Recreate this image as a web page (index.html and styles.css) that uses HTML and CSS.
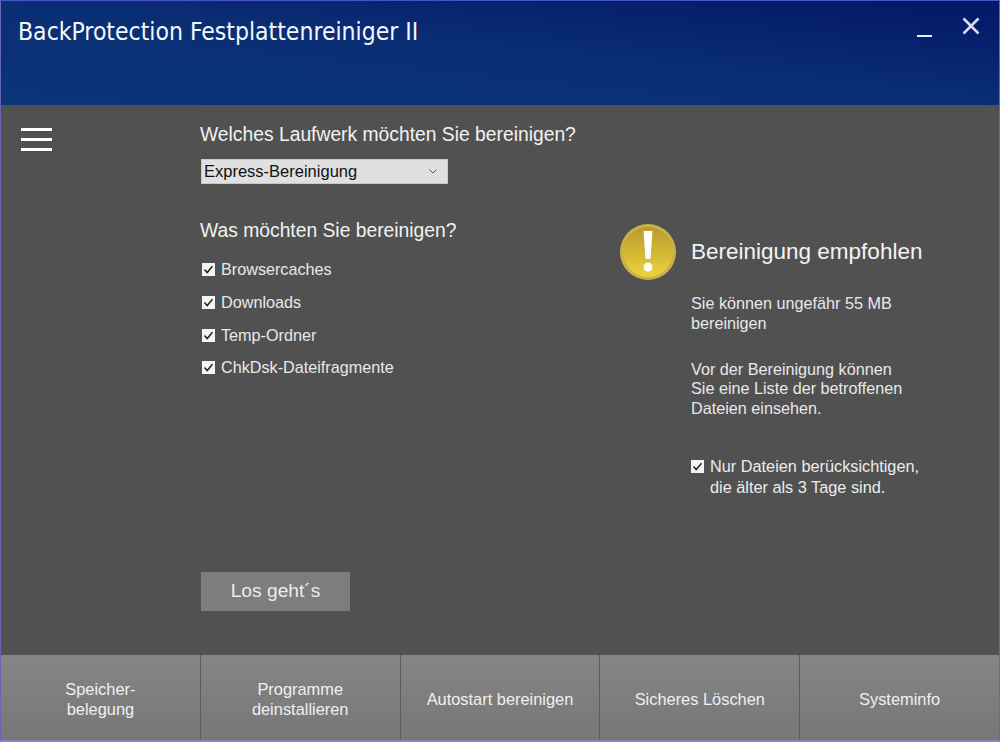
FILE: index.html
```html
<!DOCTYPE html>
<html lang="de">
<head>
  <meta charset="UTF-8" />
  <title>BackProtection Festplattenreiniger II</title>
  <link rel="stylesheet" href="styles.css">
</head>
<body>
  <div class="window">
    <header class="titlebar">
      <h1>BackProtection Festplattenreiniger II</h1>
      <div class="window-buttons">
        <svg class="btn-min" width="16" height="4" viewBox="0 0 16 4"><rect y="1" width="15" height="2" fill="#e8ecf8"/></svg>
        <svg class="btn-close" width="20" height="20" viewBox="0 0 20 20"><path d="M2.5 2.5 17.5 17.5M17.5 2.5 2.5 17.5" stroke="#d8dcec" stroke-width="2.6" fill="none"/></svg>
      </div>
    </header>

    <main class="content">
      <div class="menu-col">
        <div class="hamburger"><span></span><span></span><span></span></div>
      </div>

      <div class="form-col">
        <h2 class="question">Welches Laufwerk möchten Sie bereinigen?</h2>
        <div class="select">
          <span>Express-Bereinigung</span>
          <svg width="8" height="5" viewBox="0 0 8 5"><path d="M.5.5 4 4 7.5.5" stroke="#555" fill="none"/></svg>
        </div>
        <h2 class="question second">Was möchten Sie bereinigen?</h2>
        <ul class="checks">
          <li><span class="check"><svg viewBox="0 0 13 13"><path d="M2.5 6.5 5.2 9.5 10.5 3.2" stroke="#222" stroke-width="1.5" fill="none"/></svg></span>Browsercaches</li>
          <li><span class="check"><svg viewBox="0 0 13 13"><path d="M2.5 6.5 5.2 9.5 10.5 3.2" stroke="#222" stroke-width="1.5" fill="none"/></svg></span>Downloads</li>
          <li><span class="check"><svg viewBox="0 0 13 13"><path d="M2.5 6.5 5.2 9.5 10.5 3.2" stroke="#222" stroke-width="1.5" fill="none"/></svg></span>Temp-Ordner</li>
          <li><span class="check"><svg viewBox="0 0 13 13"><path d="M2.5 6.5 5.2 9.5 10.5 3.2" stroke="#222" stroke-width="1.5" fill="none"/></svg></span>ChkDsk-Dateifragmente</li>
        </ul>
        <button class="go">Los geht´s</button>
      </div>

      <div class="info-col">
        <div class="status">
          <svg width="58" height="58" viewBox="0 0 58 58">
            <defs>
              <linearGradient id="gold" x1="0" y1="0" x2="0" y2="1">
                <stop offset="0" stop-color="#b89a2c"/>
                <stop offset="1" stop-color="#edd23e"/>
              </linearGradient>
            </defs>
            <circle cx="29" cy="29" r="28" fill="#c9b049"/>
            <circle cx="29" cy="29" r="25" fill="url(#gold)"/>
            <path d="M24.5 8h9l-2 28h-5z" fill="#fff"/>
            <circle cx="29" cy="44" r="4.5" fill="#fff"/>
          </svg>
          <h3>Bereinigung empfohlen</h3>
        </div>
        <p class="note first">Sie können ungefähr 55 MB<br>bereinigen</p>
        <p class="note">Vor der Bereinigung können<br>Sie eine Liste der betroffenen<br>Dateien einsehen.</p>
        <div class="age-check">
          <span class="check"><svg viewBox="0 0 13 13"><path d="M2.5 6.5 5.2 9.5 10.5 3.2" stroke="#222" stroke-width="1.5" fill="none"/></svg></span>
          <span>Nur Dateien berücksichtigen,<br>die älter als 3 Tage sind.</span>
        </div>
      </div>
    </main>

    <nav class="tabs">
      <a>Speicher-<br>belegung</a>
      <a>Programme<br>deinstallieren</a>
      <a>Autostart bereinigen</a>
      <a>Sicheres Löschen</a>
      <a>Systeminfo</a>
    </nav>
  </div>
</body>
</html>
```

FILE: styles.css
```css
* {
  box-sizing: border-box;
}

body {
  margin: 0;
  font-family: "Liberation Sans", Arial, sans-serif;
  color: #f2f2f2;
}

.window {
  width: 1000px;
  height: 742px;
  display: flex;
  flex-direction: column;
  background: #515151;
  border-left: 1px solid #6a63b8;
  border-right: 1px solid #6a63b8;
  border-top: 1px solid #4654c8;
  border-bottom: 2px solid #8a84c4;
}

.titlebar {
  height: 104px;
  flex: none;
  display: flex;
  justify-content: space-between;
  padding: 15px 18px 0 17px;
  background: linear-gradient(to bottom left, #021768 0%, #0a2e74 50%, #0b3478 100%);
}

.titlebar h1 {
  margin: 0;
  font-family: "DejaVu Sans Condensed", "DejaVu Sans", sans-serif;
  font-size: 24.5px;
  font-weight: 400;
  line-height: 32px;
  color: #f4f7fb;
}

.window-buttons {
  display: flex;
  align-items: flex-start;
  gap: 28px;
}

.btn-min {
  margin-top: 18px;
}

.btn-close {
  margin-top: 0;
}

.content {
  flex: 1;
  display: flex;
  min-height: 0;
}

.menu-col {
  width: 199px;
  flex: none;
  padding: 23px 0 0 20px;
}

.hamburger {
  width: 31px;
  display: flex;
  flex-direction: column;
  gap: 7px;
}

.hamburger span {
  display: block;
  height: 3px;
  background: #fff;
}

.form-col {
  width: 419px;
  flex: none;
}

.question {
  margin: 0;
  font-size: 19.3px;
  font-weight: 400;
  line-height: 24px;
  padding-top: 18px;
}

.question.second {
  padding-top: 35px;
}

.select {
  width: 247px;
  height: 25px;
  margin: 12px 0 0 1px;
  padding: 0 10px 0 2px;
  display: flex;
  align-items: center;
  justify-content: space-between;
  background: #e0e0e0;
  border: 1px solid #c8c8c8;
  color: #111;
  font-size: 16.5px;
}

.checks {
  list-style: none;
  margin: 10.5px 0 0;
  padding: 0 0 0 2px;
  font-size: 16.2px;
  color: #e8e8e8;
}

.checks li {
  height: 32.7px;
  display: flex;
  align-items: center;
  gap: 6px;
}

.check {
  width: 13px;
  height: 13px;
  flex: none;
  display: block;
  background: #f4f4f4;
}

.check svg {
  display: block;
}

.go {
  display: block;
  width: 149px;
  height: 39px;
  margin: 187.5px 0 0 1px;
  border: 0;
  background: #7d7d7d;
  color: #ececec;
  font-family: inherit;
  font-size: 19.2px;
}

.info-col {
  flex: 1;
  padding: 118px 0 0;
}

.status {
  display: flex;
  align-items: center;
  gap: 14px;
}

.status h3 {
  margin: 0;
  font-size: 22.5px;
  font-weight: 400;
  color: #f4f4f4;
}

.note {
  margin: 0 0 0 72px;
  font-size: 16.2px;
  line-height: 19.5px;
  color: #e8e8e8;
}

.note.first {
  margin-top: 13px;
  margin-bottom: 26.5px;
}

.age-check {
  margin: 37.5px 0 0 72px;
  display: flex;
  gap: 6px;
  font-size: 16.3px;
  line-height: 21px;
  color: #ececec;
}

.age-check .check {
  margin-top: 4px;
}

.tabs {
  height: 85px;
  flex: none;
  display: flex;
  background: linear-gradient(180deg, #858585, #777777);
}

.tabs a {
  flex: 1;
  display: flex;
  align-items: center;
  justify-content: center;
  padding-top: 2px;
  text-align: center;
  font-size: 16.4px;
  line-height: 20px;
  color: #f0f0f0;
  border-left: 1px solid #5c5c5c;
}

.tabs a:first-child {
  border-left: 0;
}
```
